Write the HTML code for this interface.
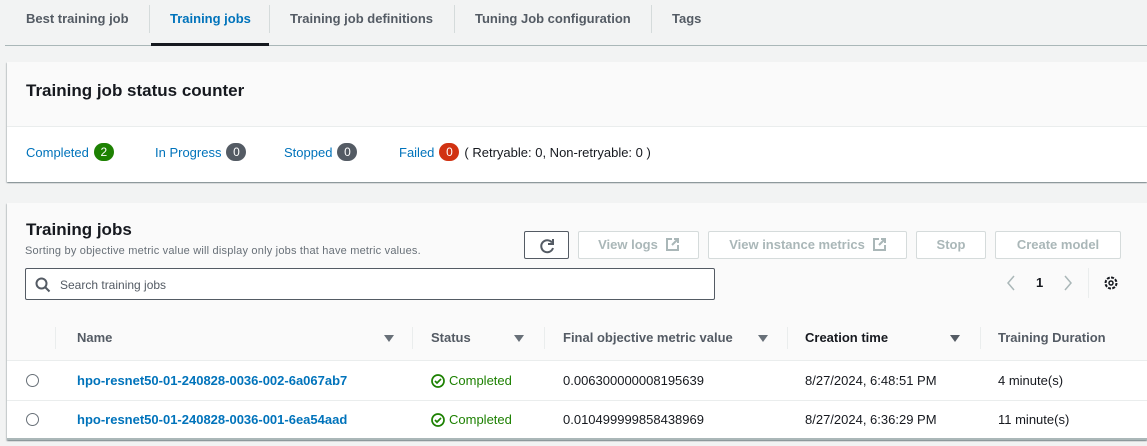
<!DOCTYPE html>
<html><head><style>
*{box-sizing:border-box;margin:0;padding:0}
body{width:1147px;height:446px;background:#f2f3f3;font-family:"Liberation Sans",sans-serif;font-size:13px;color:#16191f;position:relative;overflow:hidden}
.a{position:absolute;white-space:nowrap}
.tab{font-weight:bold;color:#545b64;font-size:13px;top:11px}
.sep{position:absolute;width:1px;background:#d5dbdb}
.card{position:absolute;background:#fff;box-shadow:0 1px 1px rgba(0,28,36,.3),1px 1px 1px rgba(0,28,36,.15),-1px 1px 1px rgba(0,28,36,.15)}
.badge{display:inline-block;min-width:20px;height:18px;border-radius:9px;color:#fff;font-size:12px;text-align:center;line-height:18px;margin-left:5px;vertical-align:1px}
.lnk{color:#0073bb}
.btn{position:absolute;top:231px;height:28px;border:1px solid #d5dbdb;background:#fff;color:#aab7b8;font-weight:bold;font-size:13px;text-align:center;line-height:26px;border-radius:2px}
.th{font-weight:bold;color:#545b64;top:330px}
.tri{position:absolute;top:335px;width:0;height:0;border-left:5px solid transparent;border-right:5px solid transparent;border-top:7px solid #687078}
.radio{position:absolute;left:26px;width:13px;height:13px;border:1px solid #687078;border-radius:50%;background:#fff}
.ok{color:#1d8102}
.ext{display:inline-block;vertical-align:-2px;margin-left:8px}
</style></head><body>
<div class="a tab" style="left:26px">Best training job</div>
<div class="sep" style="left:149px;top:5px;height:28px"></div>
<div class="a tab" style="left:170px;color:#0073bb">Training jobs</div>
<div class="sep" style="left:269px;top:5px;height:28px"></div>
<div class="a tab" style="left:290px">Training job definitions</div>
<div class="sep" style="left:454px;top:5px;height:28px"></div>
<div class="a tab" style="left:475px">Tuning Job configuration</div>
<div class="sep" style="left:651px;top:5px;height:28px"></div>
<div class="a tab" style="left:672px">Tags</div>
<div class="a" style="left:5px;top:45px;width:1142px;height:1px;background:#aab7b8"></div>
<div class="a" style="left:151px;top:43px;width:118px;height:3px;background:#16191f"></div>

<div class="card" style="left:7px;top:62px;width:1140px;height:120px">
 <div style="height:65px;background:#fafafa;border-bottom:1px solid #eaeded"></div>
</div>
<div class="a" style="left:26px;top:81px;font-size:17px;font-weight:bold">Training job status counter</div>
<div class="a" style="left:26px;top:143px"><span class="lnk">Completed</span><span class="badge" style="background:#1d8102">2</span></div>
<div class="a" style="left:155px;top:143px"><span class="lnk">In Progress</span><span class="badge" style="background:#545b64">0</span></div>
<div class="a" style="left:284px;top:143px"><span class="lnk">Stopped</span><span class="badge" style="background:#545b64">0</span></div>
<div class="a" style="left:399px;top:143px"><span class="lnk">Failed</span><span class="badge" style="background:#d13212">0</span><span style="margin-left:5px">( Retryable: 0, Non-retryable: 0 )</span></div>

<div class="card" style="left:7px;top:203px;width:1140px;height:237px;border-bottom:2px solid #aab7b8">
 <div style="height:158px;background:#fafafa;border-bottom:1px solid #eaeded"></div>
</div>
<div class="a" style="left:26px;top:220px;font-size:17px;font-weight:bold">Training jobs</div>
<div class="a" style="left:25px;top:245px;font-size:11px;color:#687078;letter-spacing:0.2px">Sorting by objective metric value will display only jobs that have metric values.</div>
<div class="a" style="left:524px;top:231px;width:45px;height:28px;border:1px solid #545b64;background:#fff;border-radius:2px">
 <svg width="45" height="28" viewBox="0 0 45 28"><path d="M27 10.5A6 6 0 1 0 28 16" fill="none" stroke="#545b64" stroke-width="2"/><path d="M28 7v5h-5" fill="none" stroke="#545b64" stroke-width="2"/></svg>
</div>
<div class="btn" style="left:578px;width:121px">View logs<svg class="ext" width="13" height="13"><path d="M6 1H1v11h11V7" fill="none" stroke="#aab7b8" stroke-width="2"/><path d="M8 1h4v4M12 1L6 7" fill="none" stroke="#aab7b8" stroke-width="2"/></svg></div>
<div class="btn" style="left:708px;width:199px">View instance metrics<svg class="ext" width="13" height="13"><path d="M6 1H1v11h11V7" fill="none" stroke="#aab7b8" stroke-width="2"/><path d="M8 1h4v4M12 1L6 7" fill="none" stroke="#aab7b8" stroke-width="2"/></svg></div>
<div class="btn" style="left:916px;width:70px">Stop</div>
<div class="btn" style="left:995px;width:126px">Create model</div>
<div class="a" style="left:25px;top:268px;width:690px;height:32px;border:1px solid #545b64;background:#fff;border-radius:2px"></div>
<svg class="a" style="left:35px;top:277px" width="16" height="16"><circle cx="6.5" cy="6.5" r="5" fill="none" stroke="#545b64" stroke-width="2"/><path d="M10 10l4.5 4.5" stroke="#545b64" stroke-width="2"/></svg>
<div class="a" style="left:60px;top:278px;font-size:12px;color:#545b64">Search training jobs</div>
<svg class="a" style="left:1005px;top:275px" width="70" height="16"><path d="M9 1L3 8l6 7" fill="none" stroke="#aab7b8" stroke-width="1.5"/><path d="M60 1l6 7-6 7" fill="none" stroke="#aab7b8" stroke-width="1.5"/></svg>
<div class="a" style="left:1036px;top:275px;font-weight:bold">1</div>
<div class="sep" style="left:1088px;top:268px;height:30px;background:#eaeded"></div>
<svg class="a" style="left:1103px;top:275px" width="16" height="16" viewBox="0 0 16 16"><circle cx="8" cy="8" r="5.5" fill="none" stroke="#16191f" stroke-width="2" stroke-dasharray="3 1.3"/><circle cx="8" cy="8" r="2" fill="none" stroke="#16191f" stroke-width="1.5"/></svg>

<div class="sep" style="left:55px;top:327px;height:22px;background:#eaeded"></div>
<div class="a th" style="left:77px">Name</div><div class="tri" style="left:384px"></div>
<div class="sep" style="left:412px;top:327px;height:22px;background:#eaeded"></div>
<div class="a th" style="left:431px">Status</div><div class="tri" style="left:514px"></div>
<div class="sep" style="left:544px;top:327px;height:22px;background:#eaeded"></div>
<div class="a th" style="left:563px">Final objective metric value</div><div class="tri" style="left:758px"></div>
<div class="sep" style="left:787px;top:327px;height:22px;background:#eaeded"></div>
<div class="a th" style="left:805px;color:#16191f">Creation time</div><div class="tri" style="left:950px;border-top-color:#545b64"></div>
<div class="sep" style="left:980px;top:327px;height:22px;background:#eaeded"></div>
<div class="a th" style="left:998px">Training Duration</div>

<div class="a" style="left:7px;top:400px;width:1140px;height:1px;background:#eaeded"></div>
<div class="radio" style="top:374px"></div>
<div class="a lnk" style="left:77px;top:373px;font-weight:bold">hpo-resnet50-01-240828-0036-002-6a067ab7</div>
<svg class="a" style="left:431px;top:374px" width="14" height="14"><circle cx="7" cy="7" r="6" fill="none" stroke="#1d8102" stroke-width="1.7"/><path d="M4 7l2 2 4-4" fill="none" stroke="#1d8102" stroke-width="1.7"/></svg>
<div class="a ok" style="left:449px;top:373px">Completed</div>
<div class="a" style="left:563px;top:373px">0.006300000008195639</div>
<div class="a" style="left:805px;top:373px">8/27/2024, 6:48:51 PM</div>
<div class="a" style="left:998px;top:373px">4 minute(s)</div>

<div class="radio" style="top:413px"></div>
<div class="a lnk" style="left:77px;top:412px;font-weight:bold">hpo-resnet50-01-240828-0036-001-6ea54aad</div>
<svg class="a" style="left:431px;top:413px" width="14" height="14"><circle cx="7" cy="7" r="6" fill="none" stroke="#1d8102" stroke-width="1.7"/><path d="M4 7l2 2 4-4" fill="none" stroke="#1d8102" stroke-width="1.7"/></svg>
<div class="a ok" style="left:449px;top:412px">Completed</div>
<div class="a" style="left:563px;top:412px">0.010499999858438969</div>
<div class="a" style="left:805px;top:412px">8/27/2024, 6:36:29 PM</div>
<div class="a" style="left:998px;top:412px">11 minute(s)</div>
</body></html>
